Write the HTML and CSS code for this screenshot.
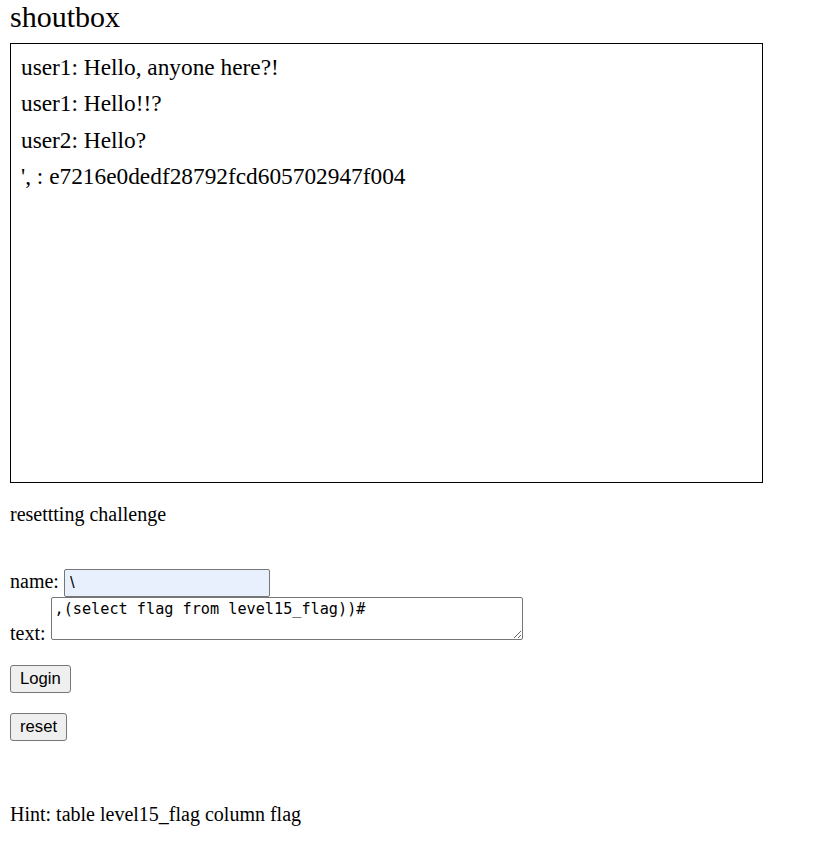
FILE: index.html
```html
<!DOCTYPE html>
<html>
<head>
  <title>shoutbox</title>
  <link rel="stylesheet" href="styles.css">
</head>

<body>
  <div class="title">shoutbox</div>

  <div class="shoutbox">
    <div class="msg">user1: Hello, anyone here?!</div>
    <div class="msg">user1: Hello!!?</div>
    <div class="msg">user2: Hello?</div>
    <div class="msg">', : e7216e0dedf28792fcd605702947f004</div>
  </div>

  <p class="status">resettting challenge</p>

  <form class="shout-form" method="post">
    name: <input type="text" name="name" value="\" autocomplete="off"><br>
    text: <textarea name="text" spellcheck="false">,(select flag from level15_flag))#</textarea>
    <p><button type="submit">Login</button></p>
  </form>

  <form class="reset-form" method="post">
    <p><button type="submit" name="reset">reset</button></p>
  </form>

  <p class="hint">Hint: table level15_flag column flag</p>
</body>
</html>
```

FILE: styles.css
```css
body {
  font-family: 'Liberation Serif', 'Times New Roman', serif;
  font-size: 20px;
  color: #000;
  background-color: #fff;
  margin: 0 10px;
}

.title {
  font-size: 30px;
}

/* message box */
.shoutbox {
  box-sizing: border-box;
  width: 753px;
  height: 440px;
  margin-top: 8.5px;
  padding: 10px;
  border: 1px solid #000;
}

.msg {
  font-size: 23.33px;
  margin-bottom: 9.6px;
}

.status {
  margin: 20px 0;
}

.shout-form {
  margin: 43px 0 0;
}

.shout-form p,
.reset-form p {
  margin: 20px 0;
}

input[type="text"] {
  box-sizing: border-box;
  width: 206px;
  height: 28px;
  padding: 1px 5px;
  font-family: 'Liberation Sans', Arial, sans-serif;
  font-size: 16.67px;
  color: #000;
  background-color: #e8f0fe;
  border: 1px solid #767676;
  border-radius: 2px;
}

textarea {
  box-sizing: border-box;
  width: 472px;
  height: 43px;
  padding: 2px 3px;
  font-family: 'DejaVu Sans Mono', monospace;
  font-size: 15.2px;
  color: #000;
  border: 1px solid #767676;
  border-radius: 2px;
  vertical-align: baseline;
}

button {
  padding: 3px 9px;
  font-family: 'Liberation Sans', Arial, sans-serif;
  font-size: 16.67px;
  color: #000;
  background-color: #efefef;
  border: 1px solid #767676;
  border-radius: 3px;
}

.hint {
  margin-top: 62px;
}
```
